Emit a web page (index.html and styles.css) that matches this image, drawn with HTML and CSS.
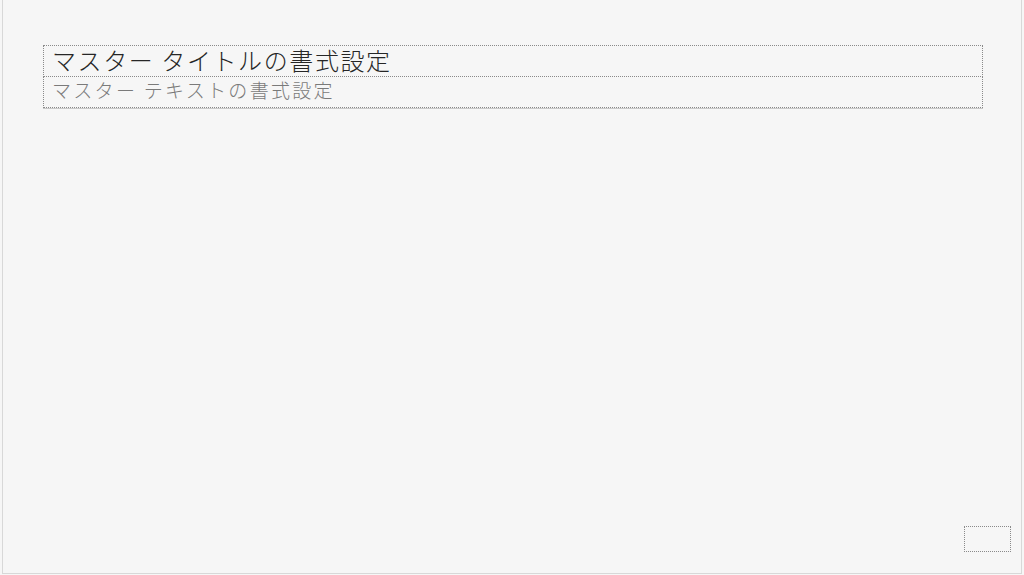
FILE: index.html
```
<!DOCTYPE html>
<html lang="ja">
<head>
    <meta charset="UTF-8">
    <title>スライドマスター</title>
    <link rel="stylesheet" href="styles.css">
</head>
<body>
    <div class="slide">
        <div class="placeholders">
            <div class="title-box">マスター タイトルの書式設定</div>
            <div class="text-box">マスター テキストの書式設定</div>
        </div>
        <div class="number-box"></div>
    </div>
</body>
</html>
```

FILE: styles.css
```
* {
    margin: 0;
    padding: 0;
    box-sizing: border-box;
}

html, body {
    width: 1024px;
    height: 575px;
    background-color: #f6f6f6;
    overflow: hidden;
}

body {
    padding: 0 2px 1px 2px;
}

.slide {
    width: 100%;
    height: 100%;
    border: 1px solid #d8d8d8;
    border-top: none;
    display: flex;
    flex-direction: column;
    justify-content: space-between;
    padding: 45px 38px 21px 40px;
    font-family: "Noto Sans CJK JP", "Noto Sans", sans-serif;
}

.placeholders {
    display: flex;
    flex-direction: column;
    border-bottom: 1px solid #c8c8c8;
}

.title-box {
    height: 32px;
    border: 1px dotted #8a8a8a;
    padding: 0 0 0 8px;
    font-size: 24px;
    font-weight: 300;
    line-height: 28px;
    letter-spacing: 1.6px;
    color: #262626;
}

.text-box {
    height: 31px;
    border: 1px dotted #8a8a8a;
    border-top: none;
    padding: 1px 0 0 8px;
    font-size: 19px;
    font-weight: 300;
    line-height: 24px;
    color: #7a7a7a;
    letter-spacing: 2.3px;
}

.number-box {
    align-self: flex-end;
    width: 47px;
    height: 26px;
    margin-right: -28px;
    border: 1px dotted #8a8a8a;
}
```
